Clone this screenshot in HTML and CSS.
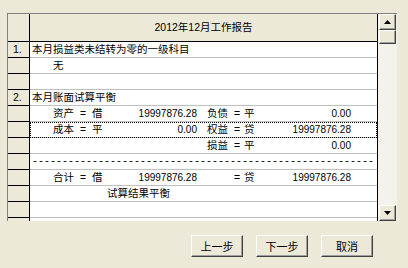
FILE: index.html
```html
<!DOCTYPE html>
<html lang="zh-CN">
<head>
<meta charset="utf-8">
<title>2012年12月工作报告</title>
<link rel="stylesheet" href="styles.css">
</head>
<body>
<div class="page">
  <div class="grid">
    <div class="table">
      <div class="row head">
        <div class="fix"></div>
        <div class="cell title">2012年12月工作报告</div>
      </div>
      <div class="row">
        <div class="fix">1.</div>
        <div class="cell text">本月损益类未结转为零的一级科目</div>
      </div>
      <div class="row">
        <div class="fix"></div>
        <div class="cell text ind">无</div>
      </div>
      <div class="row">
        <div class="fix"></div>
        <div class="cell"></div>
      </div>
      <div class="row">
        <div class="fix">2.</div>
        <div class="cell text">本月账面试算平衡</div>
      </div>
      <div class="row">
        <div class="fix"></div>
        <div class="cell bal">
          <span></span><span>资产</span><span>=</span><span>借</span><span class="num">19997876.28</span>
          <span></span><span>负债</span><span>=</span><span>平</span><span class="num">0.00</span>
        </div>
      </div>
      <div class="row">
        <div class="fix"></div>
        <div class="cell bal focus">
          <span></span><span>成本</span><span>=</span><span>平</span><span class="num">0.00</span>
          <span></span><span>权益</span><span>=</span><span>贷</span><span class="num">19997876.28</span>
        </div>
      </div>
      <div class="row">
        <div class="fix"></div>
        <div class="cell bal">
          <span></span><span></span><span></span><span></span><span class="num"></span>
          <span></span><span>损益</span><span>=</span><span>平</span><span class="num">0.00</span>
        </div>
      </div>
      <div class="row">
        <div class="fix"></div>
        <div class="cell dashes">---------------------------------------------------------</div>
      </div>
      <div class="row">
        <div class="fix"></div>
        <div class="cell bal">
          <span></span><span>合计</span><span>=</span><span>借</span><span class="num">19997876.28</span>
          <span></span><span></span><span>=</span><span>贷</span><span class="num">19997876.28</span>
        </div>
      </div>
      <div class="row">
        <div class="fix"></div>
        <div class="cell text result">试算结果平衡</div>
      </div>
      <div class="row">
        <div class="fix"></div>
        <div class="cell"></div>
      </div>
      <div class="row">
        <div class="fix"></div>
        <div class="cell"></div>
      </div>
    </div>
    <div class="sb">
      <div class="sbtn"><svg width="7" height="4" viewBox="0 0 7 4"><path d="M3.5 0L7 4H0Z" fill="#000"/></svg></div>
      <div class="thumb"></div>
      <div class="track"></div>
      <div class="sbtn"><svg width="7" height="4" viewBox="0 0 7 4"><path d="M0 0H7L3.5 4Z" fill="#000"/></svg></div>
    </div>
  </div>
  <div class="btns">
    <button class="btn">上一步</button>
    <button class="btn">下一步</button>
    <button class="btn">取消</button>
  </div>
</div>
</body>
</html>
```
FILE: styles.css
```css
html, body {
  margin: 0;
  background: #ece9d8;
}
body {
  width: 408px;
  height: 268px;
  overflow: hidden;
  font-family: "Liberation Sans", "Noto Sans CJK SC", sans-serif;
  font-size: 10.5px;
  color: #000;
}
.page {
  padding: 13px 0 0 7px;
}
.grid {
  display: flex;
  width: 390px;
  height: 208px;
  box-sizing: border-box;
  border-top: 1px solid #808080;
  border-left: 1px solid #808080;
  overflow: hidden;
}
.table {
  width: 370px;
  flex: none;
  box-sizing: border-box;
  border-right: 1px solid #000;
  background: #fff;
}
.row {
  display: grid;
  grid-template-columns: 22px 1fr;
  height: 16px;
}
.row.head {
  height: 28px;
}
.fix {
  box-sizing: border-box;
  background: #ece9d8;
  border-right: 1px solid #000;
  border-bottom: 1px solid #000;
  padding-left: 5px;
  line-height: 15px;
}
.cell {
  box-sizing: border-box;
  border-bottom: 1px solid #c0c0c0;
  line-height: 15px;
  white-space: nowrap;
  overflow: hidden;
}
.head .cell {
  background: #ece9d8;
  border-bottom: 1px solid #000;
  line-height: 27px;
  text-align: center;
}
.text {
  padding-left: 2px;
}
.ind {
  padding-left: 23px;
}
.result {
  padding-left: 77px;
}
.bal {
  display: grid;
  grid-template-columns: 23px 27px 12px 30px 75px 10px 27px 10px 32px 75px;
}
.num {
  font-size: 10px;
  text-align: right;
}
.focus {
  outline: 1px dotted #000;
  outline-offset: -1px;
}
.dashes {
  padding-left: 2px;
  font-family: "Liberation Mono", monospace;
  font-size: 10px;
}
.sb {
  flex: 1;
  display: flex;
  flex-direction: column;
  padding: 0 1px 0 1px;
  background: #f4f2ea;
}
.sbtn, .thumb {
  box-sizing: border-box;
  background: #ece9d8;
  border-top: 1px solid #fff;
  border-left: 1px solid #fff;
  border-right: 1px solid #404040;
  border-bottom: 1px solid #404040;
  box-shadow: inset -1px -1px 0 #a0a0a0;
}
.sbtn {
  height: 16px;
  display: flex;
  align-items: center;
  justify-content: center;
}
.thumb {
  height: 14px;
}
.track {
  flex: 1;
}
.btns {
  display: flex;
  justify-content: flex-end;
  gap: 13px;
  padding-right: 35px;
  margin-top: 14px;
}
.btn {
  width: 52px;
  height: 22px;
  padding: 0;
  margin: 0;
  box-sizing: border-box;
  background: #ece9d8;
  border-top: 1px solid #fff;
  border-left: 1px solid #fff;
  border-right: 1px solid #404040;
  border-bottom: 1px solid #404040;
  box-shadow: inset -1px -1px 0 #a0a0a0;
  font-family: "Liberation Sans", "Noto Sans CJK SC", sans-serif;
  font-size: 11px;
  color: #000;
}
```
